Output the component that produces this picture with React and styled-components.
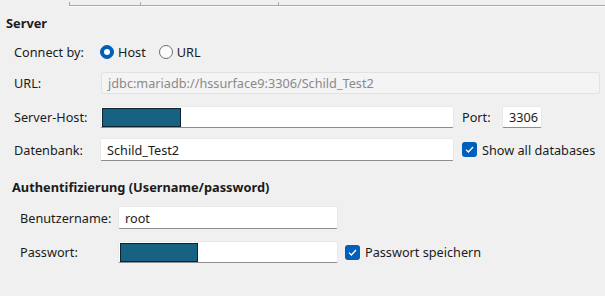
import React from 'react';
import styled, { createGlobalStyle } from 'styled-components';

const GlobalStyle = createGlobalStyle`
  html, body {
    margin: 0;
    padding: 0;
    background: #f0f0f0;
  }
`;

const Panel = styled.div`
  width: 605px;
  height: 296px;
  overflow: hidden;
  background: #f0f0f0;
  font-family: "Noto Sans", "Open Sans", sans-serif;
  font-size: 12.7px;
  color: #1b1b1b;
  box-sizing: border-box;
`;

const TabStrip = styled.div`
  display: flex;
  margin-left: 69px;
  height: 6px;
`;

const TabEdge = styled.div`
  flex: ${p => (p.$grow ? 1 : `0 0 ${p.$w}px`)};
  border-bottom: 1px solid #a8a8a8;
  border-left: 1px solid #a8a8a8;
  box-shadow: 0 1px 0 #fafafa;
  height: 3px;
  margin-top: 2px;
`;

const SectionTitle = styled.div`
  font-weight: 700;
  font-size: 12.8px;
  line-height: 16px;
  padding-left: ${p => p.$indent}px;
  margin-top: ${p => p.$top}px;
`;

const Row = styled.div`
  display: flex;
  align-items: center;
  height: ${p => p.$h || 22}px;
  margin-top: ${p => p.$top}px;
  padding-left: ${p => p.$indent}px;
`;

const Label = styled.div`
  width: ${p => p.$w}px;
  flex: none;
  white-space: nowrap;
`;

const Field = styled.div`
  position: relative;
  box-sizing: border-box;
  width: ${p => p.$w}px;
  height: ${p => p.$h || 22}px;
  flex: none;
  display: flex;
  align-items: center;
  padding-left: 6px;
  background: ${p => (p.$disabled ? '#f4f4f4' : '#ffffff')};
  border: 1px solid ${p => (p.$disabled ? '#e2e2e2' : '#e8e8e8')};
  border-bottom-color: ${p => (p.$disabled ? '#e2e2e2' : '#8d8d8d')};
  border-radius: 2px;
  color: ${p => (p.$disabled ? '#8a8a8a' : '#1b1b1b')};
  white-space: nowrap;
  overflow: hidden;
`;

const Redacted = styled.div`
  position: absolute;
  left: 1px;
  top: 1px;
  width: ${p => p.$w}px;
  height: 19px;
  box-sizing: border-box;
  background: #176183;
  border: 1px solid #0d2430;
`;

const Radios = styled.div`
  display: flex;
  align-items: center;
  gap: 13px;
`;

const Choice = styled.label`
  display: flex;
  align-items: center;
  gap: 4px;
`;

const RadioDot = styled.span`
  width: 14px;
  height: 14px;
  box-sizing: border-box;
  border-radius: 50%;
  flex: none;
  background: ${p => (p.$on ? '#005fb8' : '#fbfbfb')};
  border: 1px solid ${p => (p.$on ? '#005fb8' : '#6d6d6d')};
  display: flex;
  align-items: center;
  justify-content: center;
  &::after {
    content: '';
    display: ${p => (p.$on ? 'block' : 'none')};
    width: 6px;
    height: 6px;
    border-radius: 50%;
    background: #fff;
  }
`;

const Check = styled.span`
  width: 15px;
  height: 15px;
  border-radius: 3px;
  background: #005fb8;
  flex: none;
  display: flex;
  align-items: center;
  justify-content: center;
`;

const CheckRow = styled.div`
  display: flex;
  align-items: center;
  gap: 5px;
  margin-left: ${p => p.$left}px;
  white-space: nowrap;
`;

const PortLabel = styled.div`
  margin-left: 8px;
  width: 40px;
`;

const Tick = () => (
  <svg width="9" height="7" viewBox="0 0 9 7">
    <path d="M1 3.6 L3.4 6 L8 1" fill="none" stroke="#fff" strokeWidth="1.3" />
  </svg>
);

export default function App() {
  return (
    <Panel>
      <GlobalStyle />
      <TabStrip>
        <TabEdge $w={70} />
        <TabEdge $w={137} />
        <TabEdge $grow />
      </TabStrip>

      <SectionTitle $indent={6} $top={9}>Server</SectionTitle>

      <Row $indent={14} $top={11} $h={20}>
        <Label $w={86}>Connect by:</Label>
        <Radios>
          <Choice><RadioDot $on />Host</Choice>
          <Choice><RadioDot />URL</Choice>
        </Radios>
      </Row>

      <Row $indent={14} $top={10}>
        <Label $w={87}>URL:</Label>
        <Field $w={499} $disabled>jdbc:mariadb://hssurface9:3306/Schild_Test2</Field>
      </Row>

      <Row $indent={14} $top={12}>
        <Label $w={86}>Server-Host:</Label>
        <Field $w={354}><Redacted $w={79} /></Field>
        <PortLabel>Port:</PortLabel>
        <Field $w={40}>3306</Field>
      </Row>

      <Row $indent={14} $top={10} $h={23}>
        <Label $w={86}>Datenbank:</Label>
        <Field $w={354} $h={23}>Schild_Test2</Field>
        <CheckRow $left={8}><Check><Tick /></Check>Show all databases</CheckRow>
      </Row>

      <SectionTitle $indent={12} $top={18}>Authentifizierung (Username/password)</SectionTitle>

      <Row $indent={20} $top={11} $h={23}>
        <Label $w={98}>Benutzername:</Label>
        <Field $w={220} $h={23}>root</Field>
      </Row>

      <Row $indent={20} $top={12}>
        <Label $w={98}>Passwort:</Label>
        <Field $w={220}><Redacted $w={78} /></Field>
        <CheckRow $left={7}><Check><Tick /></Check>Passwort speichern</CheckRow>
      </Row>
    </Panel>
  );
}
